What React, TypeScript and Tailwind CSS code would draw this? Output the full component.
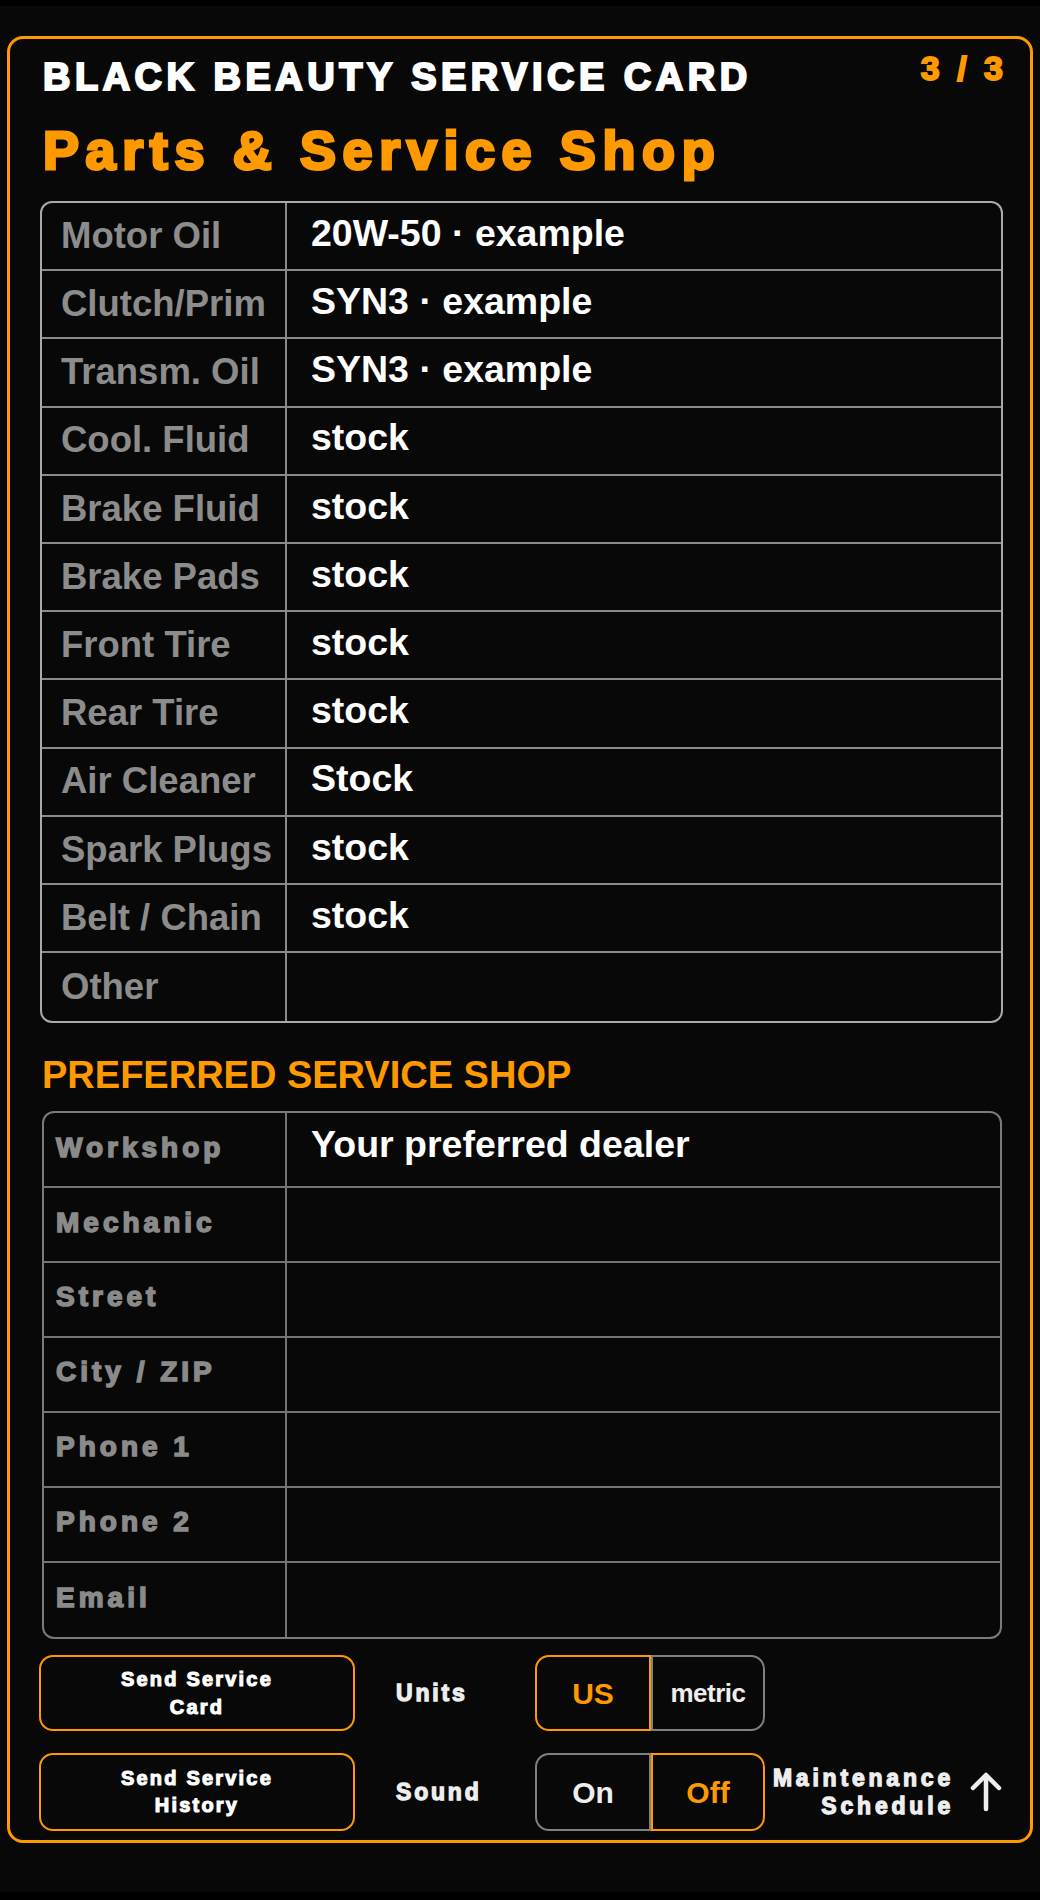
import React from "react";

// Arial Black is not installed: bold + a thin text stroke gets close to its weight
const heavy = "[-webkit-text-stroke:0.055em_currentColor]";

const parts: [string, string][] = [
  ["Motor Oil", "20W-50 · example"],
  ["Clutch/Prim", "SYN3 · example"],
  ["Transm. Oil", "SYN3 · example"],
  ["Cool. Fluid", "stock"],
  ["Brake Fluid", "stock"],
  ["Brake Pads", "stock"],
  ["Front Tire", "stock"],
  ["Rear Tire", "stock"],
  ["Air Cleaner", "Stock"],
  ["Spark Plugs", "stock"],
  ["Belt / Chain", "stock"],
  ["Other", ""],
];

const shop: [string, string][] = [
  ["Workshop", "Your preferred dealer"],
  ["Mechanic", ""],
  ["Street", ""],
  ["City / ZIP", ""],
  ["Phone 1", ""],
  ["Phone 2", ""],
  ["Email", ""],
];

function ArrowUpIcon() {
  return (
    <svg width="34" height="42" viewBox="0 0 34 42" fill="none" stroke="#eeeeee" strokeWidth="4.5" strokeLinecap="round" strokeLinejoin="round">
      <path d="M17 5V38" />
      <path d="M4 17L17 4L30 17" />
    </svg>
  );
}

function Toggle({ left, right, active }: { left: string; right: string; active: "left" | "right" }) {
  const on = "border-[#ff9900] text-[#ff9900]";
  const off = "border-[#808080] text-[#eeeeee]";
  return (
    <div className="flex h-full w-[230px] shrink-0">
      <div
        className={`flex w-[116px] items-center justify-center rounded-l-[14px] border-2 text-[30px] ${
          active === "left" ? on : off
        }`}
      >
        {left}
      </div>
      <div
        className={`flex w-[114px] items-center justify-center rounded-r-[14px] border-2 ${
          right === "metric" ? "text-[26px] tracking-[-0.5px]" : "text-[30px]"
        } ${active === "right" ? on : off}`}
      >
        {right}
      </div>
    </div>
  );
}

export default function App() {
  return (
    <div className="bg-black pt-[6px] pb-[8px] font-['Liberation_Sans',Arial,sans-serif] font-bold">
      <div className="bg-[#080808] px-[7px] pt-[30px] pb-[49px]">
        <div className="rounded-[16px] border-[3px] border-[#ff9900] pl-[30px] pr-[27px] pt-[12px] pb-[9px]">
          {/* Header */}
          <div className="flex items-start justify-between">
            <h1 className={`mt-[7px] pl-[3px] text-[38px] leading-[39px] tracking-[4.5px] text-white ${heavy}`}>
              BLACK BEAUTY SERVICE CARD
            </h1>
            <span className={`-mr-[4px] text-[34px] leading-[35px] tracking-[4px] text-[#ff9900] ${heavy}`}>3 / 3</span>
          </div>
          <h2 className={`mt-[25px] pl-[3px] text-[54px] leading-[56px] tracking-[6.6px] text-[#ff9900] ${heavy}`}>
            Parts &amp; Service Shop
          </h2>

          {/* Parts table */}
          <div className="mt-[23px] overflow-hidden rounded-[12px] border-2 border-[#aaaaaa]">
            {parts.map(([label, value], i) => (
              <div
                key={label}
                className={`flex h-[68.2px] ${i < parts.length - 1 ? "border-b-2 border-[#8a8a8a]" : ""}`}
              >
                <div className="flex w-[245px] shrink-0 items-center border-r-2 border-[#8a8a8a] pl-[19px] text-[36.5px] leading-none text-[#8c8c8c]">
                  {label}
                </div>
                <div className="flex flex-1 items-center pb-[5px] pl-[24px] text-[37.5px] leading-none text-white">
                  {value}
                </div>
              </div>
            ))}
          </div>

          {/* Preferred shop */}
          <h3 className="mt-[33px] pl-[2px] text-[38px] leading-[38px] text-[#ff9900]">PREFERRED SERVICE SHOP</h3>
          <div className="mt-[17px] ml-[2px] mr-[1px] overflow-hidden rounded-[12px] border-2 border-[#7a7a7a]">
            {shop.map(([label, value], i) => (
              <div
                key={label}
                className={`flex h-[74.9px] ${i < shop.length - 1 ? "border-b-2 border-[#747474]" : ""}`}
              >
                <div
                  className={`flex w-[243px] shrink-0 items-center border-r-2 border-[#747474] pb-[4px] pl-[12px] text-[28px] leading-none tracking-[4px] text-[#8a8a8a] ${heavy}`}
                >
                  {label}
                </div>
                <div className="flex flex-1 items-center pb-[9px] pl-[24px] text-[37.5px] leading-none text-white">
                  {value}
                </div>
              </div>
            ))}
          </div>

          {/* Controls */}
          <div className="mt-[16px] flex h-[76px] items-center">
            <button
              className={`-ml-[1px] flex h-full w-[316px] shrink-0 items-center justify-center rounded-[14px] border-2 border-[#ff9900] text-center text-[20px] leading-[28px] tracking-[2.2px] text-white ${heavy}`}
            >
              Send Service
              <br />
              Card
            </button>
            <span className={`ml-[41px] w-[139px] shrink-0 text-[23px] tracking-[2.8px] text-[#eeeeee] ${heavy}`}>Units</span>
            <Toggle left="US" right="metric" active="left" />
          </div>
          <div className="mt-[22px] flex h-[78px] items-center">
            <button
              className={`-ml-[1px] flex h-full w-[316px] shrink-0 items-center justify-center rounded-[14px] border-2 border-[#ff9900] text-center text-[20px] leading-[27px] tracking-[2.2px] text-white ${heavy}`}
            >
              Send Service
              <br />
              History
            </button>
            <span className={`ml-[41px] w-[139px] shrink-0 text-[23px] tracking-[2.8px] text-[#eeeeee] ${heavy}`}>Sound</span>
            <Toggle left="On" right="Off" active="right" />
            <div className="flex flex-1 items-center justify-end gap-[15px]">
              <span
                className={`whitespace-nowrap text-right text-[23px] leading-[28px] tracking-[3.8px] text-[#eeeeee] ${heavy}`}
              >
                Maintenance
                <br />
                Schedule
              </span>
              <ArrowUpIcon />
            </div>
          </div>
        </div>
      </div>
    </div>
  );
}
